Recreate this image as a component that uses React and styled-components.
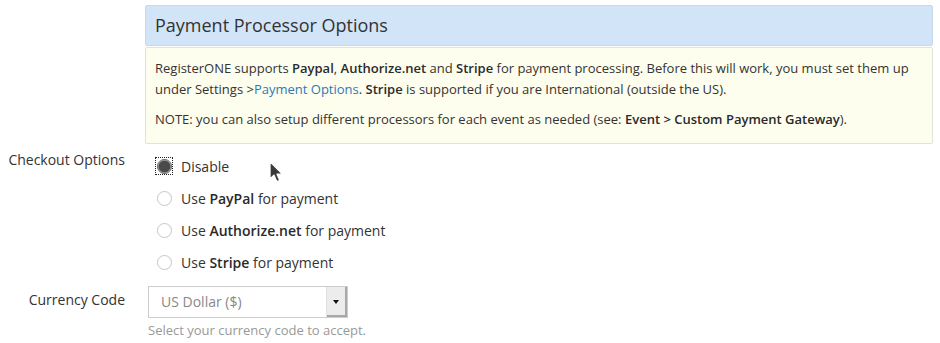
import React from "react";
import styled, { createGlobalStyle } from "styled-components";

const GlobalStyle = createGlobalStyle`
  body {
    margin: 0;
    background: #fff;
    font-family: "Open Sans", "Liberation Sans", sans-serif;
    color: #333;
  }
`;

const Page = styled.div`
  position: relative;
  padding-top: 5px;
  width: 940px;
`;

const Row = styled.div`
  display: grid;
  grid-template-columns: 145px 788px;
  margin-top: ${(p) => p.$gap || 0}px;
`;

const Label = styled.div`
  font-size: 14px;
  line-height: 20px;
  text-align: right;
  padding-right: 20px;
  padding-top: ${(p) => p.$top || 0}px;
`;

const Panel = styled.div`
  display: flex;
  flex-direction: column;
  gap: 1px;
`;

const PanelHeader = styled.div`
  height: 39px;
  background: #d1e4f8;
  border: 1px solid #c9d8e8;
  border-radius: 2px;
  padding-left: 9px;
  font-size: 18px;
  line-height: 39px;
  color: #333;
`;

const PanelBody = styled.div`
  background: #fefeee;
  border: 1px solid #e2e2d8;
  border-radius: 2px;
  padding: 10px 9px 13px;
  font-size: 13px;
  line-height: 21px;

  p {
    margin: 0;
  }
  p + p {
    margin-top: 9px;
  }
  b {
    font-weight: 600;
    color: #2a2a2a;
  }
  a {
    color: #2a7ab8;
    text-decoration: none;
  }
`;

const RadioGroup = styled.div`
  display: flex;
  flex-direction: column;
  padding-left: 11px;
`;

const RadioRow = styled.label`
  display: flex;
  align-items: center;
  height: 32px;
  font-size: 14px;
  gap: 9px;

  b {
    font-weight: 600;
    color: #2a2a2a;
  }
`;

const RadioWrap = styled.span`
  display: flex;
  align-items: center;
  justify-content: center;
  width: 16px;
  height: 16px;
  box-sizing: border-box;
  outline: ${(p) => (p.$focused ? "1px dotted #222" : "none")};
`;

const RadioCircle = styled.span`
  width: 15px;
  height: 15px;
  flex: none;
  box-sizing: border-box;
  border-radius: 50%;
  border: 1px solid ${(p) => (p.$checked ? "#555" : "#c6c6c6")};
  background: ${(p) => (p.$checked ? "radial-gradient(circle, #4a4a4a 58%, #777 64%, #e8e8e8 72%)" : "#fff")};
`;

const Field = styled.div`
  display: flex;
  flex-direction: column;
  padding-left: 3px;
`;

const Select = styled.div`
  display: flex;
  width: 200px;
  height: 32px;
  box-sizing: border-box;
  border: 1px solid #ccc;
  background: #fff;
`;

const SelectValue = styled.div`
  flex: 1;
  padding-left: 12px;
  font-size: 14px;
  line-height: 30px;
  color: #888;
`;

const SelectButton = styled.div`
  width: 18px;
  background: #ececec;
  border-left: 1px solid #e0e0e0;
  box-shadow: inset -2px -2px 0 #a8a8a8;
  display: flex;
  align-items: center;
  justify-content: center;
  padding-right: 2px;
`;

const Caret = styled.span`
  width: 0;
  height: 0;
  border-left: 3px solid transparent;
  border-right: 3px solid transparent;
  border-top: 4px solid #111;
`;

const Help = styled.div`
  margin-top: 2px;
  font-size: 13px;
  line-height: 20px;
  color: #999;
`;

const Cursor = styled.svg`
  position: absolute;
  left: 268px;
  top: 160px;
`;

const Radio = ({ checked, focused, children }) => (
  <RadioRow>
    <RadioWrap $focused={focused}>
      <RadioCircle $checked={checked} />
    </RadioWrap>
    <span>{children}</span>
  </RadioRow>
);

export default function App() {
  return (
    <>
      <GlobalStyle />
      <Page>
        <Row>
          <div />
          <Panel>
            <PanelHeader>Payment Processor Options</PanelHeader>
            <PanelBody>
              <p>
                RegisterONE supports <b>Paypal</b>, <b>Authorize.net</b> and <b>Stripe</b> for payment
                processing. Before this will work, you must set them up under Settings &gt;
                <a href="#">Payment Options</a>. <b>Stripe</b> is supported if you are International
                (outside the US).
              </p>
              <p>
                NOTE: you can also setup different processors for each event as needed (see:{" "}
                <b>Event &gt; Custom Payment Gateway</b>).
              </p>
            </PanelBody>
          </Panel>
        </Row>

        <Row $gap={6}>
          <Label>Checkout Options</Label>
          <RadioGroup>
            <Radio checked focused>Disable</Radio>
            <Radio>
              Use <b>PayPal</b> for payment
            </Radio>
            <Radio>
              Use <b>Authorize.net</b> for payment
            </Radio>
            <Radio>
              Use <b>Stripe</b> for payment
            </Radio>
          </RadioGroup>
        </Row>

        <Row $gap={8}>
          <Label $top={4}>Currency Code</Label>
          <Field>
            <Select>
              <SelectValue>US Dollar ($)</SelectValue>
              <SelectButton>
                <Caret />
              </SelectButton>
            </Select>
            <Help>Select your currency code to accept.</Help>
          </Field>
        </Row>

        <Cursor width="18" height="26" viewBox="0 0 16 24">
          <path
            d="M1.5 1.5 L1.5 17.5 L5.2 14 L7.8 20 L10.6 18.8 L8 13 L13 13 Z"
            fill="#3a3a3a"
            stroke="#fff"
            strokeWidth="1.3"
            strokeLinejoin="round"
          />
        </Cursor>
      </Page>
    </>
  );
}
